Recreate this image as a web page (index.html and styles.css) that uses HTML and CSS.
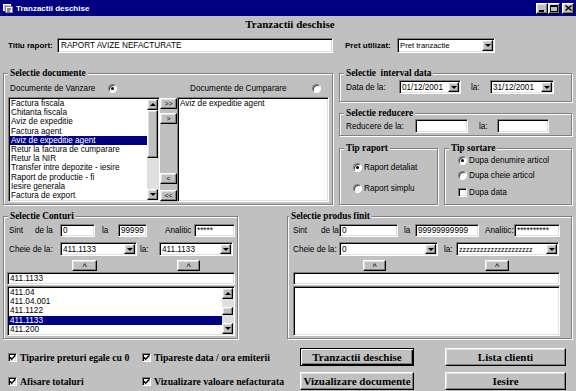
FILE: index.html
```html
<!DOCTYPE html>
<html lang="ro">
<head>
    <meta charset="UTF-8">
    <title>Tranzactii deschise</title>
    <link rel="stylesheet" href="styles.css">
</head>
<body>
<div class="window">

    <!-- Title bar -->
    <div class="titlebar">
        <svg class="app-icon" width="10" height="9" viewBox="0 0 10 9">
            <rect x="0.5" y="0.5" width="7" height="6" fill="#c0c0c0" stroke="#fff"/>
            <rect x="2.5" y="2.5" width="7" height="6" fill="#fff" stroke="#808080"/>
            <path d="M4 5h4M4 7h3" stroke="#000080"/>
        </svg>
        <span class="title-text">Tranzactii deschise</span>
        <div class="caption-btns">
            <span class="cap-btn raised">
                <svg width="6" height="7" viewBox="0 0 6 7"><rect x="0" y="5" width="5" height="2" fill="#000"/></svg>
            </span>
            <span class="cap-btn raised">
                <svg width="8" height="7" viewBox="0 0 8 7"><rect x="0.5" y="0.5" width="7" height="6" fill="none" stroke="#000"/><rect x="0" y="0" width="8" height="2" fill="#000"/></svg>
            </span>
            <span class="cap-btn raised close">
                <svg width="7" height="6" viewBox="0 0 7 6"><path d="M0.5 0.5L6.5 5.5M6.5 0.5L0.5 5.5" stroke="#000" stroke-width="1.4"/></svg>
            </span>
        </div>
    </div>

    <div class="heading">Tranzactii deschise</div>

    <!-- Titlu + pret -->
    <div class="row-titlu">
        <span class="lbl-bold lbl-titlu">Titlu raport:</span>
        <div class="field sunken titlu-field">RAPORT AVIZE NEFACTURATE</div>
        <span class="lbl-bold lbl-pret">Pret utilizat:</span>
        <div class="combo sunken pret-combo">
            <span class="combo-text">Pret tranzactie</span>
            <span class="drop raised"><span class="tri-down"></span></span>
        </div>
    </div>

    <div class="middle">
        <!-- Selectie documente -->
        <fieldset class="group grp-docs">
            <legend>Selectie documente</legend>
            <div class="docs-body">
                <div class="docs-radios">
                    <span class="doc-lbl vanz">Documente de Vanzare</span>
                    <span class="radio checked"></span>
                    <span class="doc-lbl cump">Documente de Cumparare</span>
                    <span class="radio"></span>
                </div>
                <div class="docs-lists">
                    <div class="listbox sunken docs-list">
                        <div class="items">
                            <div class="item">Factura fiscala</div>
                            <div class="item">Chitanta fiscala</div>
                            <div class="item">Aviz de expeditie</div>
                            <div class="item">Factura agent</div>
                            <div class="item sel">Aviz de expeditie agent</div>
                            <div class="item">Retur la factura de cumparare</div>
                            <div class="item">Retur la NIR</div>
                            <div class="item">Transfer intre depozite - iesire</div>
                            <div class="item">Raport de productie - fi</div>
                            <div class="item">Iesire generala</div>
                            <div class="item">Factura de export</div>
                        </div>
                        <div class="vscroll">
                            <span class="sb-btn raised"><span class="tri-up"></span></span>
                            <span class="sb-thumb raised docs-thumb"></span>
                            <span class="sb-track"></span>
                            <span class="sb-btn raised"><span class="tri-down"></span></span>
                        </div>
                    </div>
                    <div class="move-btns">
                        <span class="mv raised">&gt;&gt;</span>
                        <span class="mv raised">&gt;</span>
                        <span class="mv raised">&lt;</span>
                        <span class="mv raised">&lt;&lt;</span>
                    </div>
                    <div class="listbox sunken docs-list">
                        <div class="items">
                            <div class="item">Aviz de expeditie agent</div>
                        </div>
                    </div>
                </div>
            </div>
        </fieldset>

        <div class="right-col">
            <!-- Interval data -->
            <fieldset class="group">
                <legend>Selectie  interval data</legend>
                <div class="frow interval-body">
                    <span class="lbl i-data">Data de la:</span>
                    <div class="combo sunken i-date1">
                        <span class="combo-text">01/12/2001</span>
                        <span class="drop raised"><span class="tri-down"></span></span>
                    </div>
                    <span class="lbl i-la">la:</span>
                    <div class="combo sunken i-date2">
                        <span class="combo-text">31/12/2001</span>
                        <span class="drop raised"><span class="tri-down"></span></span>
                    </div>
                </div>
            </fieldset>

            <!-- Reducere -->
            <fieldset class="group grp-reducere">
                <legend>Selectie reducere</legend>
                <div class="frow reducere-body">
                    <span class="lbl r-de">Reducere de la:</span>
                    <div class="field sunken r-in1"></div>
                    <span class="lbl r-la">la:</span>
                    <div class="field sunken r-in2"></div>
                </div>
            </fieldset>

            <div class="tips">
                <fieldset class="group grp-tipr">
                    <legend>Tip raport</legend>
                    <div class="tipr-body">
                        <div class="opt"><span class="radio checked"></span>Raport detaliat</div>
                        <div class="opt"><span class="radio"></span>Raport simplu</div>
                    </div>
                </fieldset>
                <fieldset class="group grp-tips">
                    <legend>Tip sortare</legend>
                    <div class="tips-body">
                        <div class="opt"><span class="radio checked"></span>Dupa denumire articol</div>
                        <div class="opt"><span class="radio"></span>Dupa cheie articol</div>
                        <div class="opt"><span class="checkbox sunken"></span>Dupa data</div>
                    </div>
                </fieldset>
            </div>
        </div>
    </div>

    <div class="lower">
        <!-- Selectie conturi -->
        <fieldset class="group grp-conturi">
            <legend>Selectie Conturi</legend>
            <div class="conturi-body">
                <div class="frow r1">
                    <span class="lbl c-sint"><span class="sint">Sint</span>de la</span>
                    <div class="field sunken c-in1">0</div>
                    <span class="lbl c-la">la</span>
                    <div class="field sunken c-in2">99999</div>
                    <span class="lbl c-anal">Analitic</span>
                    <div class="field sunken c-in3">*****</div>
                </div>
                <div class="frow r2">
                    <span class="lbl c-cheie">Cheie de la:</span>
                    <div class="combo sunken c-cb1">
                        <span class="combo-text">411.1133</span>
                        <span class="drop raised"><span class="tri-down"></span></span>
                    </div>
                    <span class="lbl c-la2">la:</span>
                    <div class="combo sunken c-cb2">
                        <span class="combo-text">411.1133</span>
                        <span class="drop raised"><span class="tri-down"></span></span>
                    </div>
                </div>
                <div class="frow r3">
                    <span class="up-btn raised c-up1">^</span>
                    <span class="up-btn raised c-up2">^</span>
                </div>
                <div class="field sunken text-line c-wide">411.1133</div>
                <div class="listbox sunken acc-list c-wide">
                    <div class="items">
                        <div class="item">411.04</div>
                        <div class="item">411.04.001</div>
                        <div class="item">411.1122</div>
                        <div class="item sel">411.1133</div>
                        <div class="item">411.200</div>
                    </div>
                    <div class="vscroll">
                        <span class="sb-btn raised"><span class="tri-up"></span></span>
                        <span class="sb-track small"></span>
                        <span class="sb-thumb raised acc-thumb"></span>
                        <span class="sb-track"></span>
                        <span class="sb-btn raised"><span class="tri-down"></span></span>
                    </div>
                </div>
            </div>
        </fieldset>

        <!-- Selectie produs finit -->
        <fieldset class="group grp-produs">
            <legend>Selectie produs finit</legend>
            <div class="produs-body">
                <div class="frow r1">
                    <span class="lbl p-sint"><span class="sint">Sint</span>de la:</span>
                    <div class="field sunken p-in1">0</div>
                    <span class="lbl p-la">la</span>
                    <div class="field sunken p-in2">99999999999</div>
                    <span class="lbl p-anal">Analitic:</span>
                    <div class="field sunken p-in3">**********</div>
                </div>
                <div class="frow r2">
                    <span class="lbl p-cheie">Cheie de la:</span>
                    <div class="combo sunken p-cb1">
                        <span class="combo-text">0</span>
                        <span class="drop raised"><span class="tri-down"></span></span>
                    </div>
                    <span class="lbl p-la2">la:</span>
                    <div class="combo sunken p-cb2">
                        <span class="combo-text zz">zzzzzzzzzzzzzzzzzzzzz</span>
                        <span class="drop raised"><span class="tri-down"></span></span>
                    </div>
                </div>
                <div class="frow r3">
                    <span class="up-btn raised p-up1">^</span>
                    <span class="up-btn raised p-up2">^</span>
                </div>
                <div class="field sunken text-line p-wide"></div>
                <div class="listbox sunken acc-list p-wide"></div>
            </div>
        </fieldset>
    </div>

    <!-- Options and actions -->
    <div class="bottom">
        <div class="checks">
            <div class="chk">
                <span class="checkbox sunken"><svg width="7" height="7" viewBox="0 0 7 7"><path d="M0.8 3.2L2.7 5.2L6.3 1.2" fill="none" stroke="#000" stroke-width="1.5"/></svg></span>
                Tiparire preturi egale cu 0
            </div>
            <div class="chk">
                <span class="checkbox sunken"><svg width="7" height="7" viewBox="0 0 7 7"><path d="M0.8 3.2L2.7 5.2L6.3 1.2" fill="none" stroke="#000" stroke-width="1.5"/></svg></span>
                Tipareste data / ora emiterii
            </div>
            <div class="chk">
                <span class="checkbox sunken"><svg width="7" height="7" viewBox="0 0 7 7"><path d="M0.8 3.2L2.7 5.2L6.3 1.2" fill="none" stroke="#000" stroke-width="1.5"/></svg></span>
                Afisare totaluri
            </div>
            <div class="chk">
                <span class="checkbox sunken"><svg width="7" height="7" viewBox="0 0 7 7"><path d="M0.8 3.2L2.7 5.2L6.3 1.2" fill="none" stroke="#000" stroke-width="1.5"/></svg></span>
                Vizualizare valoare nefacturata
            </div>
        </div>
        <div class="actions">
            <span class="btn default">Tranzactii deschise</span>
            <span class="btn raised">Lista clienti</span>
            <span class="btn raised">Vizualizare documente</span>
            <span class="btn raised">Iesire</span>
        </div>
    </div>

</div>
</body>
</html>
```

FILE: styles.css
```css
/* Basic page */
* {
    box-sizing: border-box;
}

body {
    margin: 0;
    font-family: "Liberation Sans", Arial, sans-serif;
    font-size: 8.2px;
    color: #000;
    background: #c0c0c0;
}

.window {
    width: 576px;
    height: 391px;
    overflow: hidden;
    background: #c0c0c0;
}

/* 3D bevels */
.raised {
    background: #c0c0c0;
    border: 1px solid;
    border-color: #fff #000 #000 #fff;
    box-shadow: inset -1px -1px 0 #808080, inset 1px 1px 0 #dfdfdf;
}

.sunken {
    background: #fff;
    border: 1px solid;
    border-color: #808080 #fff #fff #808080;
    box-shadow: inset 1px 1px 0 #000, inset -1px -1px 0 #dfdfdf;
}

.tri-down,
.tri-up {
    width: 0;
    height: 0;
    border-left: 3px solid transparent;
    border-right: 3px solid transparent;
}
.tri-down {
    border-top: 3px solid #000;
}
.tri-up {
    border-bottom: 3px solid #000;
}

/* Title bar */
.titlebar {
    height: 16px;
    background: #000080;
    color: #fff;
    display: flex;
    align-items: center;
    padding: 0 2px 0 3px;
}
.app-icon {
    margin-right: 3px;
}
.title-text {
    font-weight: bold;
    font-size: 8px;
}
.caption-btns {
    margin-left: auto;
    display: flex;
}
.cap-btn {
    width: 12px;
    height: 11px;
    display: flex;
    align-items: center;
    justify-content: center;
}
.cap-btn.close {
    margin-left: 2px;
}

/* Heading */
.heading {
    margin-top: 2px;
    height: 12px;
    padding-left: 4px;
    font: bold 11px/12px "Liberation Serif", "Times New Roman", serif;
    text-align: center;
}

/* Generic controls */
.lbl {
    white-space: nowrap;
}
.lbl-bold {
    font-weight: bold;
    font-size: 8px;
    white-space: nowrap;
}
.field {
    display: flex;
    align-items: center;
    padding: 0 2px;
    white-space: nowrap;
    overflow: hidden;
}
.combo {
    display: flex;
    padding: 1px;
}
.combo-text {
    flex: 1;
    min-width: 0;
    display: flex;
    align-items: center;
    padding-left: 1px;
    white-space: nowrap;
    overflow: hidden;
}
.drop {
    width: 11px;
    flex: none;
    display: flex;
    align-items: center;
    justify-content: center;
}
.radio {
    width: 9px;
    height: 9px;
    flex: none;
    border-radius: 50%;
    background: #fff;
    border: 1px solid;
    border-color: #808080 #fff #fff #808080;
    box-shadow: inset 1px 1px 0 #404040;
    display: flex;
    align-items: center;
    justify-content: center;
}
.radio.checked::after {
    content: "";
    width: 3px;
    height: 3px;
    border-radius: 50%;
    background: #000;
}
.checkbox {
    width: 9px;
    height: 9px;
    flex: none;
    display: flex;
    align-items: center;
    justify-content: center;
}

/* Fieldsets */
.group {
    margin: 0;
    padding: 0;
    min-width: 0;
    border: 1px solid #808080;
    box-shadow: inset 1px 1px 0 #fff, 1px 1px 0 #fff;
}
.group legend {
    margin-left: 4px;
    padding: 0 2px;
    background: #c0c0c0;
    font: bold 9.3px/11px "Liberation Serif", "Times New Roman", serif;
    white-space: pre;
}
.frow {
    display: flex;
    align-items: center;
}
.frow > * {
    flex: none;
}

/* Titlu raport row */
.row-titlu {
    display: flex;
    align-items: center;
    height: 15px;
    margin-top: 8px;
    padding-left: 8px;
}
.lbl-titlu {
    width: 49px;
}
.titlu-field {
    width: 276px;
    height: 15px;
    padding-left: 3px;
}
.lbl-pret {
    width: 52px;
    margin-left: 12px;
}
.pret-combo {
    width: 98px;
    height: 15px;
    font-size: 7.7px;
}

/* Middle area */
.middle {
    display: flex;
    align-items: flex-start;
    margin-top: 15px;
    padding-left: 3px;
}
.grp-docs {
    width: 330px;
}
.docs-body {
    padding: 0 3px 2px 4px;
}
.docs-radios {
    display: flex;
    align-items: center;
    height: 18px;
}
.vanz {
    width: 100px;
    padding-left: 2px;
}
.cump {
    width: 122px;
    margin-left: 73px;
}
.docs-lists {
    display: flex;
}
.docs-list {
    width: 152px;
    height: 105px;
}
.move-btns {
    width: 17px;
    display: flex;
    flex-direction: column;
}
.mv {
    height: 11px;
    display: flex;
    align-items: center;
    justify-content: center;
    font-size: 7px;
    line-height: 1;
}
.mv:nth-child(1) { margin-top: 1px; }
.mv:nth-child(2) { margin-top: 4px; }
.mv:nth-child(3) { margin-top: 49px; }
.mv:nth-child(4) { margin-top: 6px; }

/* List boxes */
.listbox {
    display: flex;
    padding: 1px;
    overflow: hidden;
}
.items {
    flex: 1;
    min-width: 0;
    overflow: hidden;
}
.item {
    height: 9.2px;
    line-height: 9.2px;
    padding-left: 1px;
    white-space: nowrap;
}
.item.sel {
    background: #000080;
    color: #fff;
}
.vscroll {
    width: 11px;
    flex: none;
    display: flex;
    flex-direction: column;
}
.sb-btn {
    height: 11px;
    flex: none;
    display: flex;
    align-items: center;
    justify-content: center;
}
.sb-thumb {
    flex: none;
}
.docs-thumb {
    height: 48px;
}
.acc-thumb {
    height: 8px;
}
.sb-track {
    flex: 1;
    background: #e0e0e0;
}
.sb-track.small {
    flex: none;
    height: 8px;
}

/* Right column */
.right-col {
    width: 233px;
    margin-left: 6px;
    display: flex;
    flex-direction: column;
}
.interval-body {
    height: 22px;
    padding: 0 0 6px 6px;
}
.i-data { width: 53px; }
.i-date1 { width: 62px; height: 14px; }
.i-la { width: 29px; padding-left: 10px; }
.i-date2 { width: 64px; height: 14px; }

.grp-reducere {
    margin-top: 6px;
}
.reducere-body {
    height: 16px;
    padding: 0 0 2px 6px;
}
.r-de { width: 69px; }
.r-in1 { width: 53px; height: 14px; }
.r-la { width: 29px; padding-left: 11px; }
.r-in2 { width: 52px; height: 14px; }

.tips {
    display: flex;
    margin-top: 7px;
}
.grp-tipr {
    width: 99px;
}
.grp-tips {
    width: 128px;
    margin-left: 6px;
}
.opt {
    height: 12px;
    display: flex;
    align-items: center;
    white-space: nowrap;
}
.opt .radio,
.opt .checkbox {
    margin-right: 2px;
}
.tipr-body {
    padding: 7px 0 0 13px;
}
.tipr-body .opt + .opt {
    margin-top: 9px;
}
.tips-body {
    padding: 0 0 6px 13px;
}
.tips-body .opt:nth-child(2) { margin-top: 3px; }
.tips-body .opt:nth-child(3) { margin-top: 5px; }

/* Lower area */
.lower {
    display: flex;
    align-items: flex-start;
    margin-top: 6px;
    padding-left: 3px;
}
.grp-conturi {
    width: 235px;
}
.grp-produs {
    width: 285px;
    margin-left: 49px;
}
.grp-produs legend {
    margin-left: 1px;
}
.conturi-body {
    padding: 0 2px 2px 3px;
}
.produs-body {
    padding: 0 11px 2px 5px;
}
.r1 { margin-top: 1px; height: 15px; }
.r2 { margin-top: 3px; height: 16px; }
.r3 { margin-top: 3px; height: 11px; align-items: stretch; }
.text-line {
    margin-top: 1px;
    height: 13px;
}
.acc-list {
    margin-top: 1px;
    height: 50px;
}
.sint {
    display: inline-block;
}
.up-btn {
    display: flex;
    justify-content: center;
    padding-top: 2px;
    font-size: 9px;
    line-height: 9px;
}

.c-sint { width: 53px; padding-left: 2px; }
.c-sint .sint { width: 26px; }
.c-in1 { width: 35px; height: 13px; }
.c-la { width: 23px; padding-left: 7px; }
.c-in2 { width: 29px; height: 13px; }
.c-anal { width: 47px; padding-left: 18px; }
.c-in3 { width: 41px; height: 13px; }
.c-cheie { width: 53px; padding-left: 2px; }
.c-cb1 { width: 77px; height: 14px; }
.c-la2 { width: 22px; padding-left: 3px; }
.c-cb2 { width: 74px; height: 14px; }
.c-up1 { width: 25px; margin-left: 65px; }
.c-up2 { width: 23px; margin-left: 80px; }
.c-wide { width: 228px; }

.p-sint { width: 46px; }
.p-sint .sint { width: 28px; }
.p-in1 { width: 59px; height: 13px; }
.p-la { width: 17px; padding-left: 6px; }
.p-in2 { width: 64px; height: 13px; }
.p-anal { width: 35px; padding-left: 6px; }
.p-in3 { width: 46px; height: 13px; }
.p-cheie { width: 46px; }
.p-cb1 { width: 99px; height: 14px; }
.p-la2 { width: 18px; padding-left: 6px; }
.p-cb2 { width: 103px; height: 14px; }
.p-up1 { width: 23px; margin-left: 70px; }
.p-up2 { width: 24px; margin-left: 99px; }
.p-wide { width: 267px; }
.zz {
    font-size: 7px;
}

/* Bottom checkboxes and buttons */
.bottom {
    display: flex;
    margin-top: 9px;
}
.checks {
    width: 300px;
    padding-left: 8px;
    display: grid;
    grid-template-columns: 134px auto;
    grid-template-rows: 18px 18px;
    row-gap: 6px;
}
.chk {
    display: flex;
    align-items: center;
    font: bold 9.7px "Liberation Serif", "Times New Roman", serif;
    white-space: nowrap;
}
.chk .checkbox {
    margin-right: 3px;
}
.actions {
    display: grid;
    grid-template-columns: 114px 121px;
    grid-template-rows: 18px 18px;
    column-gap: 31px;
    row-gap: 6px;
}
.btn {
    display: flex;
    align-items: center;
    justify-content: center;
    font: bold 11px "Liberation Serif", "Times New Roman", serif;
    white-space: nowrap;
}
.btn.default {
    background: #c0c0c0;
    border: 1px solid #000;
    box-shadow: inset 1px 1px 0 #fff, inset -1px -1px 0 #000, inset -2px -2px 0 #808080;
}
```
